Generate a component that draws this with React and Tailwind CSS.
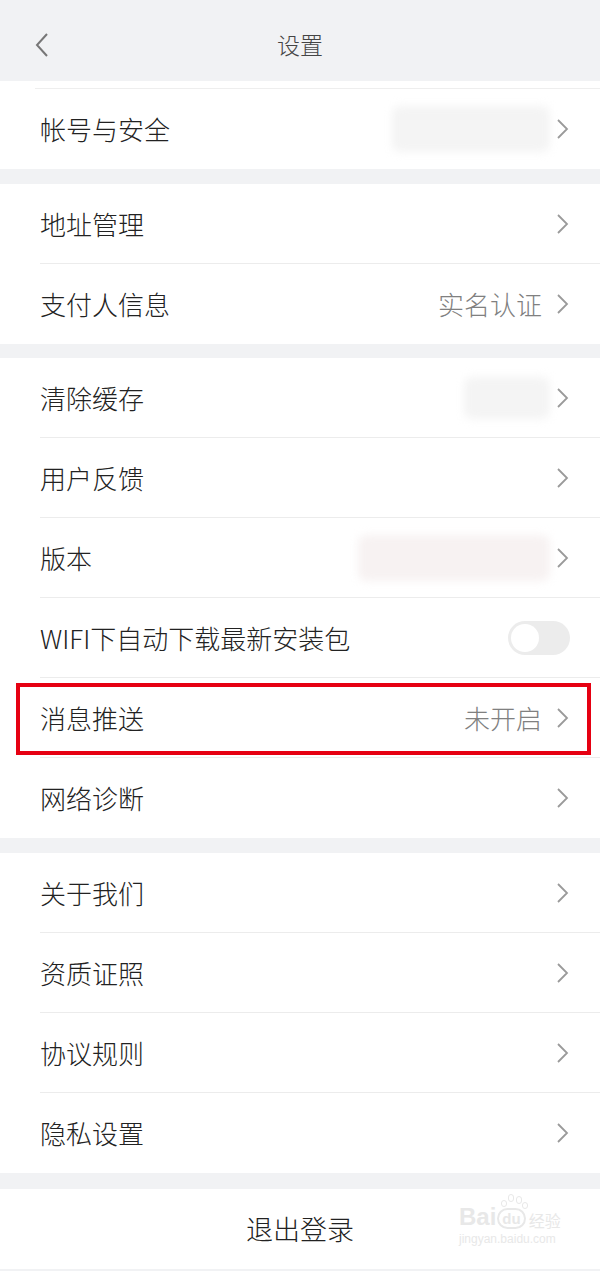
import React from "react";

const font = { fontFamily: '"Noto Sans CJK SC", "Noto Sans", sans-serif' };
const lib = { fontFamily: '"Liberation Sans", sans-serif' };

function Chevron() {
  return (
    <svg width="14" height="24" viewBox="0 0 14 24" className="shrink-0">
      <path d="M2 3 L11 12 L2 21" fill="none" stroke="#9a9a9a" strokeWidth="1.8" />
    </svg>
  );
}

function Row({ label, value, blur, divider = true, toggle }) {
  return (
    <div className="relative h-[80px] flex items-center pl-[40px] pr-[30px]">
      <span className="text-[26px] font-light text-[#222] flex-1 leading-none">{label}</span>
      {blur}
      {value && <span className="text-[26px] font-light text-[#808080] mr-[14px] leading-none">{value}</span>}
      {toggle ? (
        <div className="w-[62px] h-[34px] rounded-full bg-[#ececec] flex items-center pl-[3px]">
          <div className="w-[28px] h-[28px] rounded-full bg-white" />
        </div>
      ) : (
        <Chevron />
      )}
      {divider && <div className="absolute bottom-0 left-[40px] right-0 h-px bg-[#ececec]" />}
    </div>
  );
}

function Blob({ w, h, tint }) {
  return (
    <div
      className={`rounded-[8px] mr-[6px] blur-[4px] ${tint ? "bg-[#f7f2f2]" : "bg-[#f4f4f4]"}`}
      style={{ width: w, height: h }}
    />
  );
}

export default function App() {
  return (
    <div className="w-[600px] h-[1271px] bg-[#f1f2f4] overflow-hidden" style={font}>
      <div className="h-[81px] flex items-center justify-center relative">
        <svg width="16" height="26" viewBox="0 0 16 26" className="absolute left-[34px] top-[32px]">
          <path d="M13 2 L3 13 L13 24" fill="none" stroke="#777" strokeWidth="2" />
        </svg>
        <span className="text-[23px] font-light text-[#444] mt-[8px]">设置</span>
      </div>

      <div className="bg-white">
        <div className="h-[8px] relative">
          <div className="absolute bottom-0 left-[35px] right-0 h-px bg-[#eeeeee]" />
        </div>
        <Row label="帐号与安全" blur={<Blob w={158} h={46} />} divider={false} />
      </div>

      <div className="h-[15px]" />
      <div className="bg-white">
        <Row label="地址管理" />
        <Row label="支付人信息" value="实名认证" divider={false} />
      </div>

      <div className="h-[14px]" />
      <div className="bg-white">
        <Row label="清除缓存" blur={<Blob w={86} h={42} />} />
        <Row label="用户反馈" />
        <Row label="版本" blur={<Blob w={192} h={46} tint />} />
        <Row label="WIFI下自动下载最新安装包" toggle />
        <div className="relative">
          <Row label="消息推送" value="未开启" />
          <div className="absolute left-[16px] top-[5px] w-[575px] h-[72px] border-[4px] border-[#e60012]" />
        </div>
        <Row label="网络诊断" divider={false} />
      </div>

      <div className="h-[15px]" />
      <div className="bg-white">
        <Row label="关于我们" />
        <Row label="资质证照" />
        <Row label="协议规则" />
        <Row label="隐私设置" divider={false} />
      </div>

      <div className="h-[16px]" />
      <div className="bg-white h-[80px] flex items-center justify-center relative">
        <span className="text-[27px] font-light text-[#222]">退出登录</span>
        <div className="absolute left-[459px] top-[16px] flex flex-col items-start text-[#e8e8e8]">
          <div className="flex items-end leading-none relative">
            <span className="text-[24px] font-bold" style={lib}>Bai</span>
            <span className="relative text-[15px] font-bold border-2 border-[#e8e8e8] rounded-full px-[3px] py-[1px] mx-[1px]" style={lib}>
              du
              <span className="absolute -top-[10px] left-[2px] w-[6px] h-[7px] rounded-full border border-[#e8e8e8]" />
              <span className="absolute -top-[16px] left-[9px] w-[6px] h-[8px] rounded-full border border-[#e8e8e8]" />
              <span className="absolute -top-[14px] left-[17px] w-[6px] h-[8px] rounded-full border border-[#e8e8e8]" />
              <span className="absolute -top-[8px] left-[23px] w-[6px] h-[7px] rounded-full border border-[#e8e8e8]" />
            </span>
            <span className="text-[16px] ml-[2px] mb-[1px]">经验</span>
          </div>
          <span className="text-[12px] leading-none mt-[4px]" style={lib}>jingyan.baidu.com</span>
        </div>
      </div>
    </div>
  );
}
